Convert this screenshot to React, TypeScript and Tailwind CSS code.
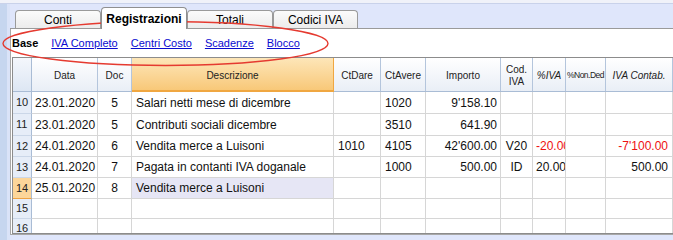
import React from "react";

type Row = {
  n: string;
  h: string;
  data: string;
  doc: string;
  desc: string;
  dare: string;
  avere: string;
  imp: string;
  cod: string;
  piva: string;
  ivac: string;
  red?: boolean;
  sel?: boolean;
};

const rows: Row[] = [
  { n: "10", h: "h-[22px]", data: "23.01.2020", doc: "5", desc: "Salari netti mese di dicembre", dare: "", avere: "1020", imp: "9'158.10", cod: "", piva: "", ivac: "" },
  { n: "11", h: "h-[22px]", data: "23.01.2020", doc: "5", desc: "Contributi sociali dicembre", dare: "", avere: "3510", imp: "641.90", cod: "", piva: "", ivac: "" },
  { n: "12", h: "h-[21px]", data: "24.01.2020", doc: "6", desc: "Vendita merce a Luisoni", dare: "1010", avere: "4105", imp: "42'600.00", cod: "V20", piva: "-20.00", ivac: "-7'100.00", red: true },
  { n: "13", h: "h-[21px]", data: "24.01.2020", doc: "7", desc: "Pagata in contanti IVA doganale", dare: "", avere: "1000", imp: "500.00", cod: "ID", piva: "20.00", ivac: "500.00" },
  { n: "14", h: "h-[21px]", data: "25.01.2020", doc: "8", desc: "Vendita merce a Luisoni", dare: "", avere: "", imp: "", cod: "", piva: "", ivac: "", sel: true },
  { n: "15", h: "h-[20px]", data: "", doc: "", desc: "", dare: "", avere: "", imp: "", cod: "", piva: "", ivac: "" },
  { n: "16", h: "h-[20px]", data: "", doc: "", desc: "", dare: "", avere: "", imp: "", cod: "", piva: "", ivac: "" },
];

const gridCols =
  "grid grid-cols-[19px_66px_34px_202px_47px_45px_75px_32px_33px_40px_1fr]";

const cell =
  "border-r border-b border-[#d6d6d6] flex items-center overflow-hidden whitespace-nowrap text-[12px] text-[#111]";

const hdr =
  "border-r border-[#b4c5dc] flex items-center justify-center overflow-hidden whitespace-nowrap text-[10px] text-[#222] bg-gradient-to-b from-[#ffffff] to-[#e9eef6] pt-[2px]";

function Tab({ label, active, w }: { label: string; active?: boolean; w: string }) {
  if (active) {
    return (
      <div
        className={`${w} h-[22px] -mb-[1px] bg-white border border-b-0 border-[#8f8f8f] rounded-t-[4px] flex items-center justify-center text-[12px] font-bold text-black relative z-10`}
      >
        {label}
      </div>
    );
  }
  return (
    <div
      className={`${w} h-[18px] bg-gradient-to-b from-[#fbfbfb] to-[#ececec] border border-b-0 border-[#9a9a9a] rounded-t-[4px] flex items-center justify-center text-[12px] text-black pt-[1px]`}
    >
      {label}
    </div>
  );
}

export default function App() {
  return (
    <div
      className="w-[673px] h-[240px] bg-[#dfe6fb] flex flex-col overflow-hidden relative"
      style={{ fontFamily: '"Liberation Sans", Arial, sans-serif' }}
    >
      <div className="h-[4px] bg-[#f0f2f9] border-b border-[#c9d2ea]" />
      <div className="flex flex-1 min-h-0">
        <div className="w-[10px] flex">
          <div className="w-[7px] bg-[#c6d6ef]" />
          <div className="w-[3px] bg-[#dae3f8]" />
        </div>
        <div className="flex-1 flex flex-col min-w-0">
          <div className="h-[25px] flex items-end pl-[5px] border-b border-[#9a9a9a]">
            <Tab label="Conti" w="w-[86px]" />
            <Tab label="Registrazioni" w="w-[86px]" active />
            <Tab label="Totali" w="w-[86px]" />
            <Tab label="Codici IVA" w="w-[85px]" />
          </div>
          <div className="h-[206px] bg-white border-l border-b border-[#a8a8a8] pl-[1px] flex flex-col">
            <div className="h-[28px] flex items-center text-[11px] pt-[1px]">
              <span className="font-bold text-black">Base</span>
              <span className="ml-[13px] text-[#0a0ad0] underline">IVA Completo</span>
              <span className="ml-[13px] text-[#0a0ad0] underline">Centri Costo</span>
              <span className="ml-[13px] text-[#0a0ad0] underline">Scadenze</span>
              <span className="ml-[13px] text-[#0a0ad0] underline">Blocco</span>
            </div>
            <div className="h-[177px] border-t border-l border-b border-[#8c8c8c] overflow-hidden">
              <div className={`${gridCols} h-[34px] border-b border-[#a9bcd5]`}>
                <div className="border-r border-[#a9bcd5] bg-gradient-to-b from-[#f4f7fc] to-[#dde6f3]" />
                <div className={hdr}>Data</div>
                <div className={hdr}>Doc</div>
                <div className="border-r border-[#f0a741] border-b-2 border-b-[#f0a741] -mb-[1px] flex items-center justify-center text-[10px] text-[#222] bg-gradient-to-b from-[#fde6b8] to-[#f8c878] pt-[2px]">
                  Descrizione
                </div>
                <div className={hdr}>CtDare</div>
                <div className={hdr}>CtAvere</div>
                <div className={hdr}>Importo</div>
                <div className={`${hdr} flex-col leading-[12px]`}>
                  <span>Cod.</span>
                  <span>IVA</span>
                </div>
                <div className={`${hdr} italic text-[#8c8c8c]`}>%IVA</div>
                <div className="border-r border-[#b4c5dc] flex items-center justify-center overflow-hidden whitespace-nowrap text-[8.5px] tracking-[-0.5px] text-[#222] bg-gradient-to-b from-[#ffffff] to-[#e9eef6] pt-[2px]">
                  %Non.Ded
                </div>
                <div className={`${hdr} italic text-[#8c8c8c]`}>IVA Contab.</div>
              </div>
              {rows.map((r) => (
                <div key={r.n} className={`${gridCols} ${r.h}`}>
                  <div
                    className={
                      r.sel
                        ? "border-r border-[#a9bcd5] border-b border-b-[#eea243] bg-[#fcd69a] flex items-center pl-[3px] text-[11px] text-[#222]"
                        : "border-r border-[#a9bcd5] border-b border-b-[#cbd7e8] bg-[#e6edf8] flex items-center pl-[3px] text-[11px] text-[#222]"
                    }
                  >
                    {r.n}
                  </div>
                  <div className={`${cell} pl-[3px]`}>{r.data}</div>
                  <div className={`${cell} justify-center`}>{r.doc}</div>
                  <div className={`${cell} pl-[4px] ${r.sel ? "bg-[#e6e6f5]" : ""}`}>{r.desc}</div>
                  <div className={`${cell} pl-[4px]`}>{r.dare}</div>
                  <div className={`${cell} pl-[4px]`}>{r.avere}</div>
                  <div className={`${cell} justify-end pr-[3px]`}>{r.imp}</div>
                  <div className={`${cell} justify-center`}>{r.cod}</div>
                  <div className={`${cell} pl-[3px] ${r.red ? "text-[#ee1111]" : ""}`}>{r.piva}</div>
                  <div className={cell}></div>
                  <div className={`${cell} justify-end pr-[4px] ${r.red ? "text-[#ee1111]" : ""}`}>{r.ivac}</div>
                </div>
              ))}
            </div>
          </div>
        </div>
      </div>
      <svg
        className="absolute left-0 top-0 pointer-events-none"
        width="673"
        height="240"
        viewBox="0 0 673 240"
      >
        <ellipse cx="165.5" cy="43.5" rx="162.5" ry="22" fill="none" stroke="#e53a30" strokeWidth="1.4" />
      </svg>
    </div>
  );
}
